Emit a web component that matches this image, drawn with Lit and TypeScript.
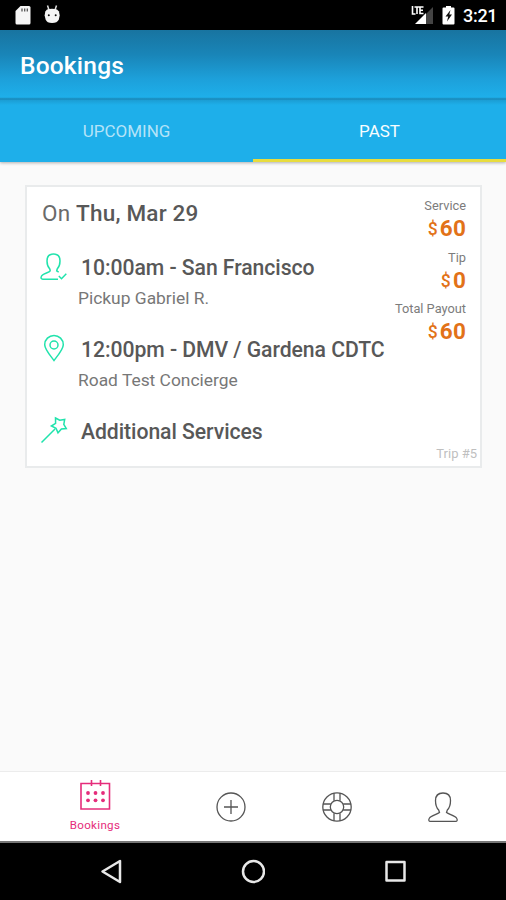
import { LitElement, html, svg, css } from "lit";
import { customElement } from "lit/decorators.js";

const person = svg`<path d="M12.500 21.500l-.8-2.500C9 16.500 8.500 13 8.500 9.500c0-4.800 3-7.500 7.500-7.500s7.500 2.700 7.500 7.500c0 3.500-.5 7-3.200 9.500l-.8 2.500c2.500 1.800 8.500 3.300 10 5.500 1.200 1.700.9 3.400-1 3.400h-25c-1.900 0-2.200-1.700-1-3.400 1.500-2.200 7.500-3.700 10-5.500z"/>`;

@customElement("status-bar")
class StatusBar extends LitElement {
  static styles = css`
    :host { display: flex; height: 30px; background: #000; color: #fff; align-items: center; padding: 0 10px 0 14px; box-sizing: border-box; flex: none; }
    .sd { margin-right: 13px; }
    .signal { margin-left: auto; margin-right: 8px; }
    .clock { font: 500 18px/30px Roboto, sans-serif; margin-left: 8px; width: 33px; white-space: nowrap; padding-top: 2px; letter-spacing: -.3px; }
    svg { display: block; flex: none; }
  `;
  render() {
    return html`
      <svg class="sd" width="17" height="30"><path fill="#f5f5f5" d="M6.500 6H15q1.500 0 1.500 1.500V23q0 1.500-1.500 1.500H3Q1.500 24.500 1.500 23V11z"/><path stroke="#555" stroke-width="1.300" d="M8 8.500v3M10.700 8.500v3M13.300 8.500v3"/></svg>
      <svg width="18" height="30"><path d="M3.500 5.500l1.500 4.500M12.500 5.500L11 10" stroke="#ddd" stroke-width="1.500"/><path fill="#f5f5f5" d="M3 9.500q5-1.500 10 0l2 2 .7 4-.9 4q-1.500 3.500-6.700 3.500t-6.500-3.500l-1-4 .7-4z"/><circle cx="4.800" cy="15.300" r="1" fill="#111"/><circle cx="11.700" cy="15.300" r="1" fill="#111"/></svg>
      <svg class="signal" width="23" height="30"><path fill="#444" d="M22 7v17h-7V14z"/><path fill="#fff" d="M15 13v11H4z"/><path stroke="#fff" stroke-width="1.600" fill="none" d="M1.500 6v8h3M3.500 7h5M6 7v7M12.500 7H9v6.500h3.500M9 10.200h3"/></svg>
      <svg width="13" height="30"><path fill="#fff" d="M4 6h5v1.500h2.500q1 0 1 1V23.500q0 1-1 1h-10q-1 0-1-1v-15q0-1 1-1H4z"/><path fill="#111" d="M8.500 10L3.500 16.500h2.700L5 21.500l5-7H7.300z"/></svg>
      <span class="clock">3:21</span>
    `;
  }
}

@customElement("top-bar")
class TopBar extends LitElement {
  static styles = css`
    :host { display: block; flex: none; font-family: Roboto, sans-serif; color: #fff; position: relative; box-shadow: 0 1px 3px rgba(0,0,0,.3); }
    .title { height: 70px; box-sizing: border-box; padding: 1px 20px 0; font-size: 24.500px; font-weight: 500; line-height: 70px; background: linear-gradient(#1874a0, #1985b8 35%, #1da0da 70%, #1eafea 96%, #1a8fc2 98%, #1a8fc2); letter-spacing: .2px; }
    .tabs { display: flex; height: 62px; background: linear-gradient(#1b9dd3, #1eafea 5px); }
    .tab { flex: 1; text-align: center; font-size: 17px; line-height: 63px; color: #b4e3f8; box-sizing: border-box; height: 62px; border-bottom: 0 solid #e8dc3e; }
    .active { color: #f8fdff; border-bottom-width: 3px; }
  `;
  render() {
    return html`<div class="title">Bookings</div>
      <div class="tabs"><div class="tab">UPCOMING</div><div class="tab active">PAST</div></div>`;
  }
}

@customElement("booking-card")
class BookingCard extends LitElement {
  static styles = css`
    :host { display: flex; box-sizing: border-box; width: 457px; height: 283px; margin: 23px 0 0 25px; border: 2px solid #e9ebec; background: #fff; color: #585858; font-family: Roboto, sans-serif; position: relative; }
    .main { flex: 1; padding: 10px 0 0 13px; white-space: nowrap; }
    .date { font-size: 22.500px; line-height: 33px; padding-left: 2px; height: 51px; letter-spacing: .2px; color: #6a6a6a; }
    b { font-weight: 500; color: #585858; }
    .row { display: grid; grid-template-columns: 38px auto; height: 82px; align-content: start; }
    .row svg { width: 28px; height: 30px; margin-top: 3px; fill: none; stroke: #20e3ac; stroke-width: 1.500; }
    .head { font-size: 21.200px; font-weight: 500; line-height: 32px; padding: 4px 0 0 3px; letter-spacing: -.06px; }
    .sub { grid-column: 2; font-size: 17.400px; line-height: 26px; color: #777; padding-top: 1px; }
    .prices { position: absolute; right: 14px; top: 8px; text-align: right; }
    .label { font-size: 12.800px; line-height: 21px; color: #7c7c7c; }
    .value { font-size: 22.500px; font-weight: 700; line-height: 24px; height: 30.600px; color: #e27218; letter-spacing: .2px; }
    .value span { font-size: 17.500px; font-weight: 500; margin-right: 2px; position: relative; top: -1px; }
    .trip { position: absolute; right: 3px; bottom: 4px; font-size: 13px; line-height: 16px; color: #bfbfbf; }
  `;
  render() {
    return html`
      <div class="main">
        <div class="date">On <b>Thu, Mar 29</b></div>
        <div class="row">
          <svg viewBox="0 0 28 30"><path d="M10.300 20l-.5-2C7.800 16 7 13.500 7 10c0-4.500 2.500-7 6.500-7S20 5.500 20 10c0 3.500-.8 6-2.800 8l-.5 2 2 1.200M10.300 20C8.500 22 2.300 22.500 1.300 25.500c-.6 1.600 0 2.700 1.400 2.700H18M18.800 25l2.700 2.700 4.800-5"/></svg>
          <div class="head">10:00am - San Francisco</div><div class="sub">Pickup Gabriel R.</div>
        </div>
        <div class="row">
          <svg viewBox="0 0 28 30"><path d="M14 27.500C9 21 4.700 16 4.700 11.700a9.300 9.300 0 0 1 18.600 0C23.300 16 19 21 14 27.500z"/><circle cx="14" cy="12" r="4"/></svg>
          <div class="head">12:00pm - DMV / Gardena CDTC</div><div class="sub">Road Test Concierge</div>
        </div>
        <div class="row">
          <svg viewBox="0 0 28 30"><path d="M1.500 27.500L15 14M15.500 3l4.200 2.200 5-.7-.9 4.800 2.500 4.200-4.900.5-3.400 3.800-2-4.600-4.600-2.200 4.200-2.600z"/></svg>
          <div class="head">Additional Services</div>
        </div>
      </div>
      <div class="prices">
        ${[["Service", 60], ["Tip", 0], ["Total Payout", 60]].map(([label, amount]) => html`
          <div class="label">${label}</div><div class="value"><span>$</span>${amount}</div>`)}
      </div>
      <div class="trip">Trip #5</div>
    `;
  }
}

@customElement("bottom-nav")
class BottomNav extends LitElement {
  static styles = css`
    :host { display: grid; grid-template-columns: 1fr 106px 106px 106px; height: 72px; box-sizing: border-box; border-top: 1px solid #ececec; border-bottom: 2px solid #777; background: #fff; flex: none; padding-right: 10px; }
    .item { display: flex; flex-direction: column; align-items: center; justify-content: center; }
    .current { justify-content: start; padding: 7px 0 0 12px; color: #e52c7b; font: 11.600px/16px Roboto, sans-serif; letter-spacing: .3px; }
    svg { width: 32px; height: 32px; fill: none; stroke: #555; stroke-width: 1.300; display: block; }
    .current svg { stroke: #e52c7b; margin-bottom: 6px; stroke-width: 1.600; }
    .current svg .dots { fill: #e52c7b; stroke: none; }
  `;
  render() {
    return html`
      <div class="item current">
        <svg viewBox="0 0 32 32"><path d="M2 4.500h28.500v25.500H2zM12.500 1v6M21.500 1v6"/><g class="dots">${[9, 16.5, 24].map(x => [14, 21.3].map(y => svg`<circle cx=${x} cy=${y} r="1.900"/>`))}</g></svg>
        Bookings
      </div>
      <div class="item"><svg viewBox="0 0 32 32"><circle cx="16" cy="16" r="14"/><path d="M16 9v14M9 16h14"/></svg></div>
      <div class="item"><svg viewBox="0 0 32 32"><circle cx="16" cy="16" r="14.200"/><circle cx="16" cy="16" r="6.700"/><path d="M13 2v7.800M19 2v7.800M13 22.200V30M19 22.200V30M2 13h7.800M2 19h7.800M22.200 13H30M22.200 19H30"/></svg></div>
      <div class="item"><svg viewBox="0 0 32 32">${person}</svg></div>
    `;
  }
}

@customElement("system-nav")
class SystemNav extends LitElement {
  static styles = css`
    :host { display: flex; justify-content: center; gap: 118px; align-items: center; height: 57px; background: #000; flex: none; }
    svg { width: 24px; height: 26px; fill: none; stroke: #e8e8e8; stroke-width: 2.500; stroke-linejoin: round; }
  `;
  render() {
    return html`
      <svg viewBox="0 0 24 26"><path d="M21 2v21L3.500 12.500z"/></svg>
      <svg viewBox="0 0 24 26"><circle cx="12.500" cy="12.500" r="10.500"/></svg>
      <svg viewBox="0 0 24 26"><path d="M3.500 3h18v18.500h-18z"/></svg>`;
  }
}

@customElement("app-root")
class AppRoot extends LitElement {
  static styles = css`
    :host { display: flex; flex-direction: column; width: 506px; height: 900px; overflow: hidden; background: #fafafa; }
    .content { flex: 1; min-height: 0; }
  `;
  render() {
    return html`<status-bar></status-bar><top-bar></top-bar><div class="content"><booking-card></booking-card></div><bottom-nav></bottom-nav><system-nav></system-nav>`;
  }
}
